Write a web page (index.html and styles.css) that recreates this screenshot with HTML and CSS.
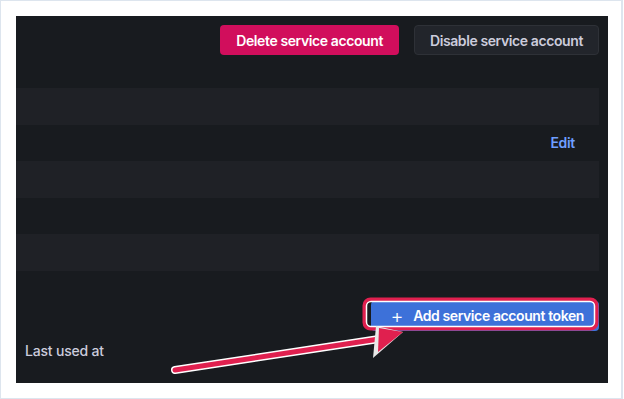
FILE: index.html
```html
<!DOCTYPE html>
<html lang="en">
<head>
    <meta charset="UTF-8">
    <title>Service account</title>
    <link rel="stylesheet" href="styles.css">
</head>
<body>
    <div class="frame">
        <div class="panel">
            <div class="actions">
                <button type="button" class="btn btn-danger">Delete service account</button>
                <button type="button" class="btn btn-secondary">Disable service account</button>
            </div>

            <div class="info-table">
                <div class="info-row striped"></div>
                <div class="info-row"><a class="edit-link">Edit</a></div>
                <div class="info-row striped"></div>
                <div class="info-row"></div>
                <div class="info-row striped"></div>
            </div>

            <div class="token-actions">
                <button type="button" class="btn btn-primary"><span class="plus">+</span>Add service account token</button>
            </div>

            <div class="tokens-head">Last used at</div>
        </div>

        <!-- annotation drawn over the screenshot -->
        <svg class="annotation" width="624" height="399" viewBox="0 0 624 399">
            <rect x="364.5" y="299.5" width="232" height="29" rx="6" fill="none" stroke="#e0204f" stroke-width="4"/>
            <rect x="366.5" y="301.5" width="228" height="25" rx="4.5" fill="none" stroke="#ffffff" stroke-width="1.5"/>
            <path d="M175 370 L379 339" stroke="#ffffff" stroke-width="8" stroke-linecap="round"/>
            <path d="M175 370 L379 339" stroke="#e0204f" stroke-width="5" stroke-linecap="round"/>
            <path d="M403 332 L373 358 L376 326 Z" fill="#e8e8e8"/>
            <path d="M403 332 L378 352 L379 328 Z" fill="#e0204f"/>
        </svg>
    </div>
</body>
</html>
```

FILE: styles.css
```css
/* General Styles */
body {
    margin: 0;
    background: #ffffff;
    font-family: Inter, "Noto Sans", sans-serif;
}

.frame {
    position: relative;
    width: 623px;
    height: 399px;
    box-sizing: border-box;
    padding: 15px 13px 15px 15px;
    border: 1px solid #dde5ee;
    border-right-width: 2px;
}

.panel {
    height: 100%;
    background: #181b1f;
    display: flex;
    flex-direction: column;
    padding-right: 9px;
}

.actions {
    display: flex;
    justify-content: flex-end;
    gap: 15px;
    padding-top: 9px;
}

.btn {
    height: 30px;
    padding: 0 15px;
    border-radius: 4px;
    border: 1px solid transparent;
    font-family: Inter, "Noto Sans", sans-serif;
    font-size: 14px;
    font-weight: 600;
    letter-spacing: -0.4px;
    cursor: pointer;
}

.btn-danger {
    background: #d10e5c;
    color: #ffffff;
}

.btn-secondary {
    background: #22252b;
    border-color: #2e3137;
    color: #ccccdc;
}

.btn-primary {
    display: flex;
    align-items: center;
    height: 30px;
    padding: 0 14px 0 18px;
    background: #3d71d9;
    color: #ffffff;
}

.plus {
    font-size: 20px;
    font-weight: 300;
    margin-right: 10px;
    line-height: 1;
}

.info-table {
    margin-top: 33px;
}

.info-row {
    height: 36.5px;
    display: flex;
    align-items: center;
    justify-content: flex-end;
    padding-right: 24px;
}

.info-row.striped {
    background: #1f2126;
}

.edit-link {
    color: #6e9fff;
    font-size: 14px;
    font-weight: 600;
    letter-spacing: -0.3px;
}

.token-actions {
    display: flex;
    justify-content: flex-end;
    margin-top: 30px;
}

.tokens-head {
    margin-top: 11px;
    padding-left: 9px;
    color: #ccccdc;
    font-size: 14px;
    font-weight: 500;
    letter-spacing: -0.2px;
}

.annotation {
    position: absolute;
    left: -1px;
    top: -1px;
    pointer-events: none;
}
```
